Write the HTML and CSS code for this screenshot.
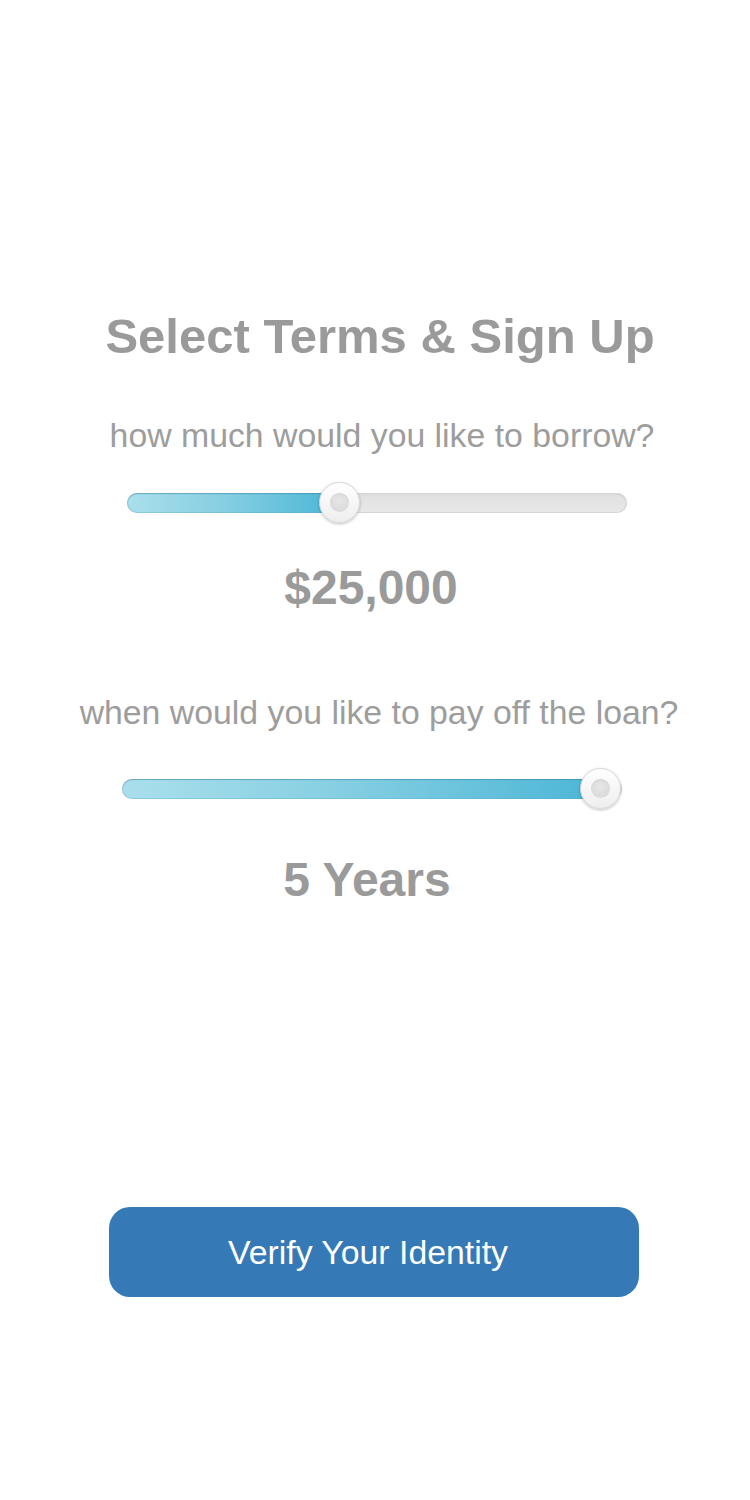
FILE: index.html
```html
<!DOCTYPE html>
<html lang="en">
<head>
<meta charset="utf-8">
<title>Select Terms &amp; Sign Up</title>
<link rel="stylesheet" href="styles.css">
</head>
<body>
<main class="page">
  <h1 class="title">Select Terms &amp; Sign Up</h1>

  <p class="question q1">how much would you like to borrow?</p>
  <div class="slider s1">
    <div class="track"><div class="fill" style="width:212px"></div></div>
    <div class="thumb" style="left:191.5px"><span class="dot"></span></div>
  </div>
  <div class="value v1">$25,000</div>

  <p class="question q2">when would you like to pay off the loan?</p>
  <div class="slider s2">
    <div class="track"><div class="fill" style="width:479px"></div></div>
    <div class="thumb" style="left:458px"><span class="dot"></span></div>
  </div>
  <div class="value v2">5 Years</div>

  <button class="cta" type="button">Verify Your Identity</button>
</main>
</body>
</html>
```
FILE: styles.css
```css
html, body {
  margin: 0;
  padding: 0;
  background: #ffffff;
}

.page {
  width: 750px;
  min-height: 1500px;
  display: flex;
  flex-direction: column;
  align-items: center;
  padding-top: 308px;
  box-sizing: border-box;
  font-family: "Liberation Sans", Arial, sans-serif;
  color: #9b9b9b;
}

.title {
  margin: 0;
  font-size: 49px;
  line-height: 56px;
  font-weight: bold;
  color: #9a9a9a;
  padding-left: 10px;
}

.question {
  margin: 0;
  font-size: 33.8px;
  line-height: 40px;
  font-weight: normal;
  color: #9d9d9d;
}

.q1 {
  margin-top: 51px;
  padding-left: 14px;
}

.q2 {
  margin-top: 76px;
  padding-left: 8px;
}

.slider {
  position: relative;
  width: 500px;
  height: 41px;
  align-self: flex-start;
}

.s1 {
  margin-top: 27px;
  margin-left: 127px;
}

.s2 {
  margin-top: 36px;
  margin-left: 122px;
}

.track {
  margin-top: 10.5px;
  height: 20px;
  border-radius: 10px;
  background: linear-gradient(#e0e0e0, #e8e8e8);
  box-shadow: inset 0 0 0 1px #d6d6d6, inset 0 1px 2px rgba(0, 0, 0, 0.08);
  overflow: hidden;
  box-sizing: border-box;
}

.fill {
  height: 100%;
  border-radius: 10px 0 0 10px;
  background: linear-gradient(90deg, #aadfec 0%, #86cfe2 45%, #4bb6d6 100%);
  box-shadow: inset 0 1px 1px rgba(40, 110, 140, 0.35), inset 0 0 0 1px rgba(90, 170, 200, 0.35);
}

.thumb {
  position: absolute;
  top: 0;
  width: 41px;
  height: 41px;
  border-radius: 50%;
  box-sizing: border-box;
  border: 1px solid #d8d8d8;
  background: linear-gradient(#ffffff, #eeeeee);
  box-shadow: 0 1px 3px rgba(0, 0, 0, 0.25);
  display: flex;
  align-items: center;
  justify-content: center;
}

.dot {
  width: 19px;
  height: 19px;
  border-radius: 50%;
  background: radial-gradient(circle at 50% 40%, #e6e6e6, #d6d6d6);
  box-shadow: inset 0 1px 1px rgba(0, 0, 0, 0.06);
}

.value {
  font-size: 48px;
  line-height: 56px;
  font-weight: bold;
  color: #9a9a9a;
}

.v1 {
  margin-top: 37px;
  margin-right: 8px;
}

.v2 {
  margin-top: 43px;
  margin-right: 16px;
}

.cta {
  margin-top: 299px;
  width: 530px;
  height: 90px;
  border: none;
  border-radius: 21px;
  background: #3579b6;
  color: #ffffff;
  font-family: "Liberation Sans", Arial, sans-serif;
  font-size: 33.8px;
  padding: 0 12px 0 0;
  margin-left: -2px;
}
```
